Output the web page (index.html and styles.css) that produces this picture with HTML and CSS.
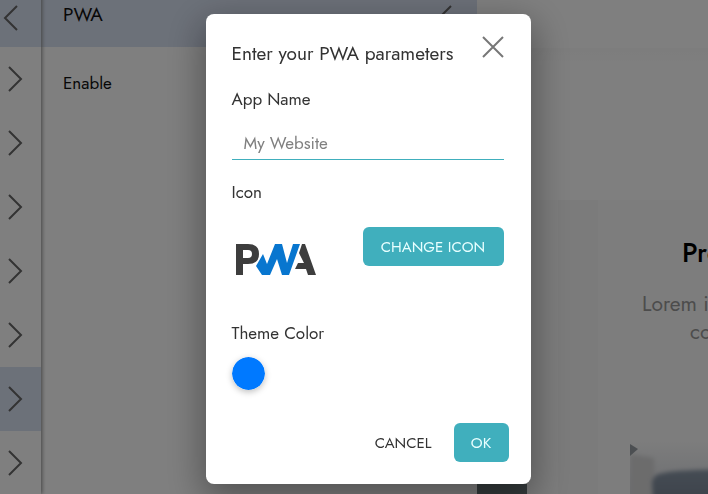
FILE: index.html
```html
<!DOCTYPE html>
<html lang="en">
<head>
<meta charset="utf-8">
<title>PWA</title>
<link rel="stylesheet" href="styles.css">
</head>
<body>
<svg class="symbols" aria-hidden="true">
  <symbol id="next" viewBox="0 0 16 26"><path d="M2 1 14 13 2 25"/></symbol>
  <symbol id="back" viewBox="0 0 16 26"><path d="M14 1 2 13 14 25"/></symbol>
</svg>
<div class="app">
  <nav class="rail" aria-label="Sections">
    <button class="rail-item active" aria-label="Back"><svg class="chevron back"><use href="#back"/></svg></button>
    <button class="rail-item" aria-label="Section 1"><svg class="chevron"><use href="#next"/></svg></button>
    <button class="rail-item" aria-label="Section 2"><svg class="chevron"><use href="#next"/></svg></button>
    <button class="rail-item" aria-label="Section 3"><svg class="chevron"><use href="#next"/></svg></button>
    <button class="rail-item" aria-label="Section 4"><svg class="chevron"><use href="#next"/></svg></button>
    <button class="rail-item" aria-label="Section 5"><svg class="chevron"><use href="#next"/></svg></button>
    <button class="rail-item active" aria-label="Section 6"><svg class="chevron"><use href="#next"/></svg></button>
    <button class="rail-item" aria-label="Section 7"><svg class="chevron"><use href="#next"/></svg></button>
  </nav>
  <section class="panel">
    <header class="panel-head"><span>PWA</span><svg class="chevron"><use href="#back"/></svg></header>
    <div class="panel-row">Enable</div>
  </section>
  <main class="page">
    <div class="page-top"></div>
    <div class="hero"></div>
    <div class="cards">
      <div class="card first"><div class="photo"></div></div>
      <article class="card second">
        <h2>Pro</h2>
        <p>Lorem i</p>
        <p class="line-two">co</p>
        <svg class="scene" viewBox="0 0 268 170" preserveAspectRatio="xMinYMin slice" aria-hidden="true">
          <defs>
            <linearGradient id="wall" x2="0" y2="1"><stop stop-color="#fbfbfb"/><stop offset=".4" stop-color="#fbfbfb"/><stop offset=".75" stop-color="#d6d9df"/></linearGradient>
            <linearGradient id="seat" x2="0" y2="1"><stop stop-color="#8b98a8"/><stop offset=".4" stop-color="#7d8999"/></linearGradient>
            <filter id="soft"><feGaussianBlur stdDeviation="2"/></filter>
          </defs>
          <rect width="268" height="170" fill="url(#wall)"/>
          <path d="M0 82 24 86 26 170H0Z" fill="#d8d8d9" filter="url(#soft)"/>
          <path d="M0 72 8 77 0 84Z" fill="#999fa4"/>
          <path d="M26 170 22 112Q22 102 34 101Q58 95 268 98V170Z" fill="url(#seat)" filter="url(#soft)"/>
        </svg>
      </article>
    </div>
  </main>
</div>
<div class="overlay">
  <form class="dialog" role="dialog" aria-labelledby="title">
    <div class="dialog-body">
      <header class="dialog-head">
        <h1 id="title">Enter your PWA parameters</h1>
        <button type="button" class="close" aria-label="Close"><svg viewBox="0 0 22 22"><path d="M1 1 21 21M21 1 1 21"/></svg></button>
      </header>
      <label class="label" for="name">App Name</label>
      <input class="field" id="name" type="text" placeholder="My Website">
      <div class="label icon-label">Icon</div>
      <div class="icon-row">
        <svg class="logo" viewBox="0 0 80 31" role="img" aria-label="PWA logo">
          <path fill="#3d3d3d" d="M0 31V0H12Q23 0 23 10 23 20 12 20H7V31ZM7 6V14H12Q16 14 16 10 16 6 12 6Z" fill-rule="evenodd"/>
          <path fill="#3d3d3d" d="M59 25 62 19H68L63 9 66 0H69L80 31H72L70 25Z"/>
          <path fill="#0876cf" d="M20 22 27 10 31 20 39 0H46L51 19 57 0H64L53 31H46L41 15 34 31H26Z"/>
        </svg>
        <button type="button" class="button change">CHANGE ICON</button>
      </div>
      <label class="label" for="color">Theme Color</label>
      <input class="swatch" id="color" type="color" value="#0079ff">
    </div>
    <footer class="actions">
      <button type="button" class="cancel">CANCEL</button>
      <button type="button" class="button ok">OK</button>
    </footer>
  </form>
</div>
</body>
</html>
```
FILE: styles.css
```css
* { box-sizing: border-box; }
html, body { height: 100%; }
body {
  margin: 0;
  overflow: hidden;
  font-family: Jost, Lato, "Liberation Sans", sans-serif;
  font-size: 17px;
  line-height: 24px;
  color: #333;
}
button, input { font: inherit; margin: 0; border: 0; padding: 0; background: none; color: inherit; }
h1, h2, p { margin: 0; font-weight: 400; }
.symbols { display: none; }

.app { display: flex; height: 100%; overflow: hidden; background: #fff; }
.rail, .panel { margin-top: -17px; flex: none; }
.rail { width: 41px; display: flex; flex-direction: column; position: relative; z-index: 1; background: #fff; box-shadow: 1px 0 4px #888; }
.rail-item { flex: none; height: 64px; display: flex; align-items: center; padding-left: 7px; }
.active, .panel-head { background: #d9e2f3; }
.chevron { width: 16px; height: 26px; fill: none; stroke: #666; stroke-width: 2; }
.rail-item .back { margin: 6px 0 0 -4px; }
.panel { width: 436px; color: #111; background: #fff; box-shadow: 1px 0 4px #999; }
.panel-head { height: 64px; padding: 0 24px 0 22px; display: flex; align-items: center; justify-content: space-between; font-size: 19px; }
.panel-head .chevron { margin-top: 6px; }
.panel-row { padding: 24px 22px 0; }

.page { flex: 1; min-width: 0; overflow: hidden; background: #fff; }
.page-top { height: 48px; }
.hero { height: 152px; background: linear-gradient(#fafafa, #fff 18px); }
.cards { display: flex; height: 294px; background: #f6f6f6; }
.card { flex: none; background: #fafafa; }
.first { width: 81px; display: flex; flex-direction: column; justify-content: flex-end; }
.photo { width: 50px; height: 10px; background: #6b7779; }
.second { margin-left: 40px; width: 300px; padding: 36px 0 0 32px; color: #999; font-size: 21px; line-height: 28px; }
.second h2 { padding-left: 52px; font-size: 27px; line-height: 34px; font-weight: 500; color: #000; }
.second p { padding-left: 12px; margin-top: 20px; }
.second .line-two { padding-left: 60px; margin-top: 0; }
.scene { display: block; width: 100%; height: 170px; margin-top: 26px; }

.overlay { position: fixed; inset: 0; z-index: 2; background: rgba(0, 0, 0, .5); padding: 14px 0 10px 28px; display: flex; align-items: flex-start; justify-content: center; }
.dialog { width: 325px; background: #fff; border-radius: 8px; box-shadow: 0 12px 36px 4px rgba(0, 0, 0, .35); }
.dialog-body { padding: 26px 27px 0 26px; }
.dialog-head { display: flex; align-items: flex-start; justify-content: space-between; margin-bottom: 19px; }
h1 { font-size: 19px; line-height: 28px; }
.close { width: 22px; height: 22px; margin-top: -4px; }
.close svg { display: block; fill: none; stroke: #777; stroke-width: 2; }
.label { display: block; }
.field { display: block; width: 100%; height: 33px; margin-top: 16px; padding: 0 12px; border-bottom: 1px solid #40afbd; outline: 0; }
.field::placeholder { color: #808080; opacity: 1; }
.icon-label { margin-top: 20px; }
.icon-row { display: flex; justify-content: space-between; align-items: flex-start; height: 66px; margin: 23px 0 28px; }
.logo { width: 80px; height: 31px; margin: 17px 0 0 4px; }
.button { height: 39px; border-radius: 6px; background: #40afbd; color: #e8ffff; font-size: 15px; }
.change { width: 141px; }
.swatch { display: block; width: 33px; height: 33px; margin-top: 12px; border-radius: 50%; overflow: hidden; box-shadow: 0 2px 6px rgba(0, 0, 0, .25); appearance: none; }
.swatch::-webkit-color-swatch-wrapper { padding: 0; }
.swatch::-webkit-color-swatch { border: 0; border-radius: 50%; }
.actions { display: flex; align-items: center; justify-content: flex-end; gap: 22px; padding: 33px 22px 22px; }
.cancel { font-size: 15px; }
.ok { width: 55px; }
```
